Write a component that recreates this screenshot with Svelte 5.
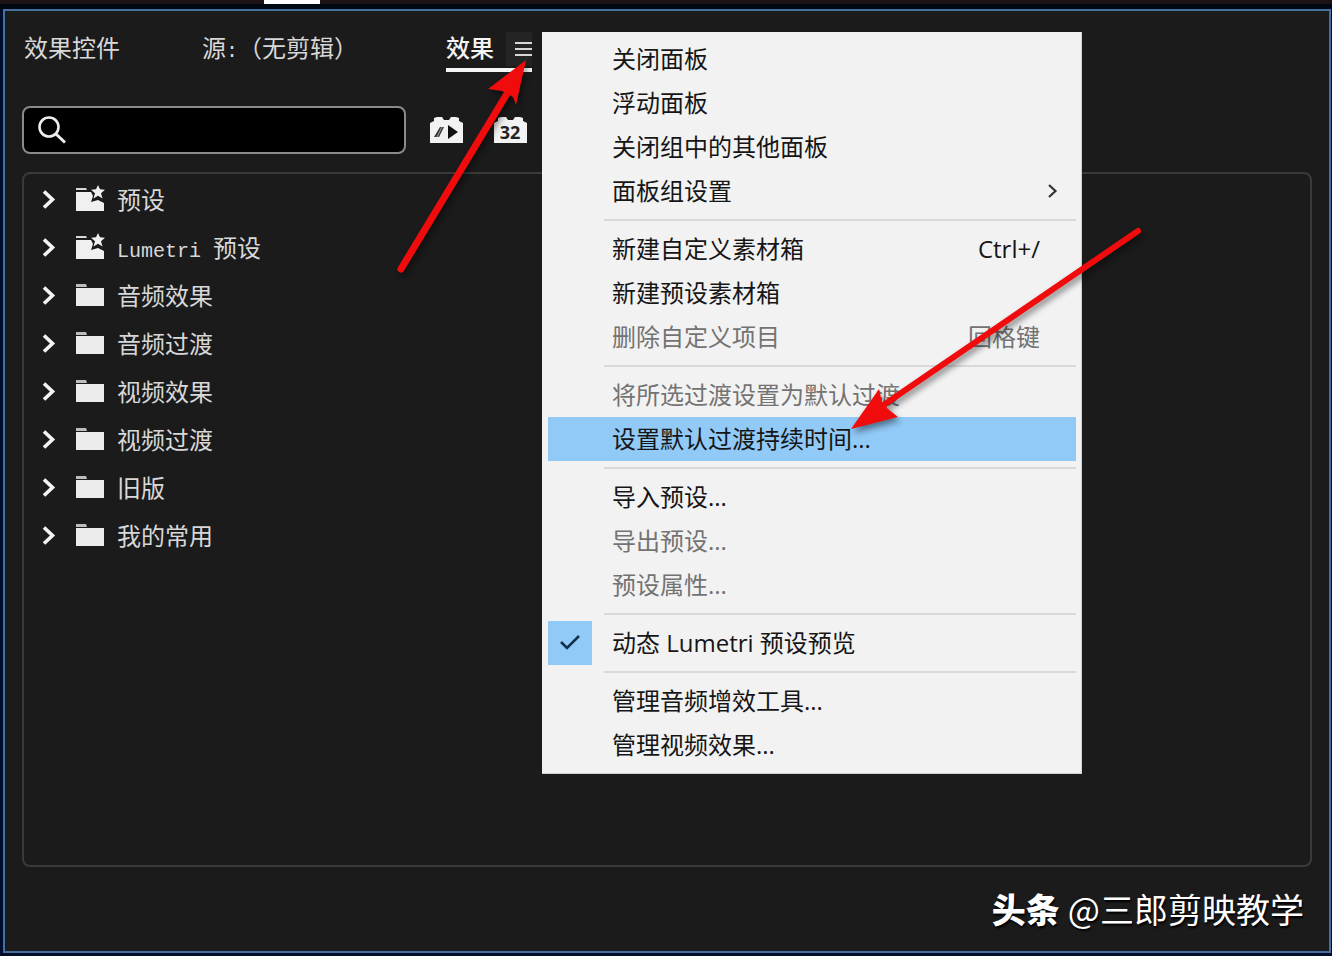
<script lang="ts">
	interface MenuItem {
		label: string;
		shortcut?: string;
		disabled?: boolean;
		active?: boolean;
		checked?: boolean;
		submenu?: boolean;
	}

	const folders = [
		{ latin: '', name: '预设', preset: true },
		{ latin: 'Lumetri ', name: '预设', preset: true },
		{ latin: '', name: '音频效果', preset: false },
		{ latin: '', name: '音频过渡', preset: false },
		{ latin: '', name: '视频效果', preset: false },
		{ latin: '', name: '视频过渡', preset: false },
		{ latin: '', name: '旧版', preset: false },
		{ latin: '', name: '我的常用', preset: false }
	];

	const groups: MenuItem[][] = [
		[
			{ label: '关闭面板' },
			{ label: '浮动面板' },
			{ label: '关闭组中的其他面板' },
			{ label: '面板组设置', submenu: true }
		],
		[
			{ label: '新建自定义素材箱', shortcut: 'Ctrl+/' },
			{ label: '新建预设素材箱' },
			{ label: '删除自定义项目', shortcut: '回格键', disabled: true }
		],
		[
			{ label: '将所选过渡设置为默认过渡', disabled: true },
			{ label: '设置默认过渡持续时间...', active: true }
		],
		[
			{ label: '导入预设...' },
			{ label: '导出预设...', disabled: true },
			{ label: '预设属性...', disabled: true }
		],
		[{ label: '动态 Lumetri 预设预览', checked: true }],
		[{ label: '管理音频增效工具...' }, { label: '管理视频效果...' }]
	];

	let search = $state('');
</script>

<div class="app">
	<div class="strip"><span></span></div>

	<main class="panel">
		<nav class="tabs">
			<button class="tab">效果控件</button>
			<button class="tab source">源<span class="latin">:</span>（无剪辑）</button>
			<div class="current">
				<button class="tab selected">效果</button>
				<button class="burger" aria-label="面板菜单">
					<svg width="17" height="16" viewBox="0 0 17 16">
						<path d="M0 2h17M0 8h17M0 14h17" stroke="#d6d6d6" stroke-width="2" />
					</svg>
				</button>
			</div>
		</nav>

		<div class="toolbar">
			<label class="search">
				<svg width="28" height="28" viewBox="0 0 28 28" fill="none" stroke="#eee">
					<circle cx="11" cy="11" r="9.5" stroke-width="2.6" />
					<path d="M18 18l9 8.5" stroke-width="3" />
				</svg>
				<input type="text" aria-label="搜索" bind:value={search} />
			</label>
			<button class="badge" aria-label="加速效果">
				<svg width="34" height="28" viewBox="0 0 34 28">
					<path d="M1 27V7L5 5V2l3-1h5l2 3h5l2-3h5l3 1v3l4 2v20z" fill="#f2f2f2" />
					<path d="M5 21L11 11h4l-5 10z" fill="#333" />
					<path d="M8 21l5-10" stroke="#aaa" />
					<path d="M19 9l10 7-10 7z" fill="#111" />
				</svg>
			</button>
			<button class="badge" aria-label="32 位颜色">
				<svg width="34" height="28" viewBox="0 0 34 28">
					<path d="M1 27V7L5 5V2l3-1h5l2 3h5l2-3h5l3 1v3l4 2v20z" fill="#f2f2f2" />
					<text x="17" y="23" text-anchor="middle">32</text>
				</svg>
			</button>
		</div>

		<ul class="tree">
			{#each folders as folder}
				<li>
					<button class="row">
						<svg class="chevron" width="14" height="20" viewBox="0 0 14 20">
							<path d="M2 1.500l8.500 8-8.500 8" fill="none" stroke="#f4f4f4" stroke-width="3.6" />
						</svg>
						<svg class="folder" width="30" height="28" viewBox="0 0 30 28">
							{#if folder.preset}
								<path d="M1 2h10l1 2H1z" fill="#d8d8d8" />
								<path d="M1 6h15l2 4-2 6 7-2 6 3v8H1z" fill="#f0f0f0" />
								<path
									d="M23 -1l2 4.200 5 .5-4 3.600 1.500 5.200-4.500-2.800-4.500 2.800L20 7.300l-4-3.600 5-.5z"
									fill="#f0f0f0"
								/>
							{:else}
								<path d="M1 2h10l1 3H1z" fill="#bdbdbd" />
								<path d="M1 6h28v18H1z" fill="#ececec" />
							{/if}
						</svg>
						<span>{#if folder.latin}<span class="latin">{folder.latin}</span>{/if}{folder.name}</span>
					</button>
				</li>
			{/each}
		</ul>

		<footer>
			<strong>头条</strong>
			<span>@三郎剪映教学</span>
		</footer>
	</main>

	<div class="menu" role="menu">
		{#each groups as group}
			<div class="group">
				{#each group as item}
					<button
						class="item"
						class:active={item.active}
						disabled={item.disabled}
						role={item.checked ? 'menuitemcheckbox' : 'menuitem'}
						aria-checked={item.checked}
					>
						<span class="mark" class:checked={item.checked}>
							{#if item.checked}
								<svg width="22" height="18" viewBox="0 0 22 18">
									<path d="M2 8l6 6L20 2" fill="none" stroke="#12324c" stroke-width="2.6" />
								</svg>
							{/if}
						</span>
						<span class="label">{item.label}</span>
						{#if item.shortcut}
							<span class="shortcut">{item.shortcut}</span>
						{/if}
						{#if item.submenu}
							<svg class="more" width="10" height="16" viewBox="0 0 10 16">
								<path d="M1 2l6.500 6L1 14" fill="none" stroke="#333" stroke-width="2.2" />
							</svg>
						{/if}
					</button>
				{/each}
			</div>
		{/each}
	</div>

	<!-- pointers to the menu button and the duration item -->
	<svg class="arrows" width="1332" height="956" viewBox="0 0 1332 956">
		<g fill="#f00c0c" stroke="#f00c0c">
			<path d="M401 269L508 92" stroke-width="7" stroke-linecap="round" />
			<path d="M526 60L488 89 502 91 513 97 516 105z" stroke="none" />
			<path d="M1138 231L885 404" stroke-width="6" stroke-linecap="round" />
			<path d="M851 429L879 389 882 402 888 409 898 417z" stroke="none" />
		</g>
	</svg>
</div>

<style>
	:global(body) {
		margin: 0;
		background: #000d2b;
	}

	.app {
		position: relative;
		display: flex;
		flex-direction: column;
		box-sizing: border-box;
		min-height: 100vh;
		padding: 0 1px 3px 3px;
		overflow: hidden;
		font-family: 'Open Sans', 'Noto Sans CJK SC', sans-serif;
		font-size: 24px;
		line-height: 32px;
	}

	button {
		padding: 0;
		border: 0;
		background: none;
		color: inherit;
		font: inherit;
		text-align: left;
	}

	svg {
		display: block;
		flex: none;
	}

	.strip {
		height: 9px;
		margin: 0 -1px 0 -3px;
		background: linear-gradient(#1c1414 4px, #000814 4px);
	}

	.strip span {
		display: block;
		width: 56px;
		height: 4px;
		margin-left: 264px;
		background: #fff;
	}

	.panel {
		display: flex;
		flex: 1;
		flex-direction: column;
		padding: 0 17px;
		border: 2px solid #466f9f;
		background: #1b1b1b;
		color: #d8d8d8;
	}

	.tabs {
		display: flex;
		height: 60px;
		padding: 21px 2px 0;
		box-sizing: border-box;
	}

	.tab {
		height: 32px;
		white-space: nowrap;
	}

	.source {
		margin-left: 82px;
	}

	.current {
		display: flex;
		justify-content: space-between;
		width: 86px;
		height: 36px;
		margin-left: 88px;
		border-bottom: 4px solid #f5f5f5;
	}

	.selected {
		color: #f4f4f4;
		font-weight: 500;
	}

	.burger {
		display: flex;
		align-items: center;
		justify-content: flex-end;
		width: 26px;
		height: 34px;
		background: #242424;
	}

	.toolbar {
		display: flex;
		align-items: center;
		height: 48px;
		margin-top: 35px;
	}

	.search {
		display: flex;
		align-items: center;
		box-sizing: border-box;
		width: 384px;
		height: 48px;
		padding: 0 14px;
		border: 2px solid #8a8a8a;
		border-radius: 8px;
		background: #000;
	}

	.search input {
		flex: 1;
		min-width: 0;
		margin-left: 8px;
		border: 0;
		outline: 0;
		background: none;
		color: #eee;
		font: inherit;
	}

	.badge {
		margin-left: 23px;
	}

	.badge + .badge {
		margin-left: 30px;
	}

	.badge text {
		fill: #222;
		font: bold 18px 'Open Sans', sans-serif;
	}

	.tree {
		flex: 1;
		margin: 18px 0 0;
		padding: 2px 0 0;
		border: 2px solid #3a3a3a;
		border-radius: 8px;
		list-style: none;
	}

	.row {
		display: flex;
		align-items: center;
		width: 100%;
		height: 48px;
		padding-left: 18px;
	}

	.folder {
		margin: 0 12px 0 19px;
		overflow: visible;
	}

	.latin {
		font-family: 'Liberation Mono', monospace;
		font-size: 20px;
		line-height: 20px;
		white-space: pre;
	}

	footer {
		display: flex;
		align-items: center;
		justify-content: flex-end;
		gap: 8px;
		height: 84px;
		padding-right: 8px;
		color: #fff;
		font-family: 'Noto Sans CJK SC', sans-serif;
		font-size: 34px;
		line-height: 48px;
		text-shadow: 1px 2px 2px #000;
	}

	footer strong {
		font-weight: 900;
	}

	.menu {
		position: absolute;
		top: 32px;
		left: 542px;
		box-sizing: border-box;
		width: 540px;
		padding: 5px 5px 6px 6px;
		border: 1px solid #d0d0d0;
		border-width: 0 1px 1px 0;
		background: #f2f2f2;
		color: #161616;
	}

	.group + .group::before {
		display: block;
		height: 2px;
		margin: 6px 0 6px 56px;
		background: #d9d9d9;
		content: '';
	}

	.item {
		display: flex;
		align-items: center;
		width: 100%;
		height: 44px;
		padding-right: 36px;
	}

	.item:disabled {
		color: #737373;
	}

	.active {
		background: #91c9f7;
	}

	.mark {
		display: flex;
		align-items: center;
		justify-content: center;
		width: 44px;
		height: 44px;
		margin-right: 20px;
	}

	.checked {
		background: #91c9f7;
	}

	.label {
		flex: 1;
		white-space: nowrap;
	}

	.more {
		margin-right: -18px;
	}

	.arrows {
		position: absolute;
		top: 0;
		left: 0;
		filter: drop-shadow(2px 4px 3px rgba(0, 0, 0, 0.45));
		pointer-events: none;
	}
</style>
